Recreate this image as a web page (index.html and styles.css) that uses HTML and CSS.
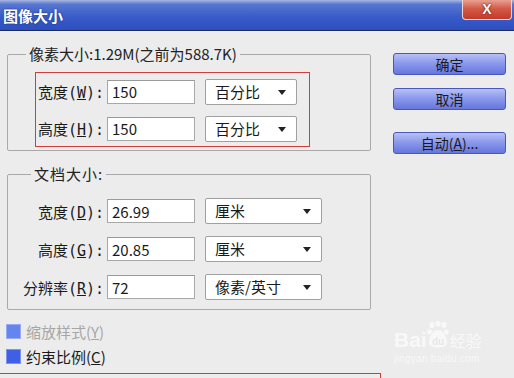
FILE: index.html
```html
<!DOCTYPE html>
<html lang="zh-CN">
<head>
    <meta charset="UTF-8">
    <title>图像大小</title>
    <link rel="stylesheet" href="styles.css">
</head>
<body>

<div class="window">
    <div class="titlebar">
        <span class="title">图像大小</span>
        <span class="close">X</span>
    </div>

    <div class="content">
        <div class="left">
            <fieldset class="group pixel">
                <legend>像素大小:1.29M(之前为588.7K)</legend>
                <div class="highlight">
                    <div class="row">
                        <label><span>宽度(<u>W</u>):</span></label>
                        <input type="text" value="150">
                        <div class="select">百分比<span class="arrow"></span></div>
                    </div>
                    <div class="row">
                        <label><span>高度(<u>H</u>):</span></label>
                        <input type="text" value="150">
                        <div class="select">百分比<span class="arrow"></span></div>
                    </div>
                </div>
            </fieldset>

            <fieldset class="group doc">
                <legend>文档大小:</legend>
                <div class="row">
                    <label><span>宽度(<u>D</u>):</span></label>
                    <input type="text" value="26.99">
                    <div class="select wide">厘米<span class="arrow"></span></div>
                </div>
                <div class="row">
                    <label><span>高度(<u>G</u>):</span></label>
                    <input type="text" value="20.85">
                    <div class="select wide">厘米<span class="arrow"></span></div>
                </div>
                <div class="row">
                    <label><span>分辨率(<u>R</u>):</span></label>
                    <input type="text" value="72">
                    <div class="select wide">像素/英寸<span class="arrow"></span></div>
                </div>
            </fieldset>

            <div class="check disabled"><span class="box"></span>缩放样式(<u>Y</u>)</div>
            <div class="check"><span class="box"></span>约束比例(<u>C</u>)</div>
            <div class="mark-box"></div>
        </div>

        <div class="actions">
            <button>确定</button>
            <button>取消</button>
            <button class="auto">自动(<u>A</u>)...</button>
        </div>
    </div>

    <!-- watermark -->
    <div class="watermark">
        <div class="wm-logo">
            <span>Bai</span>
            <svg width="22" height="30" viewBox="0 0 22 30">
                <ellipse cx="5" cy="4" rx="2.6" ry="3" fill="#fff"/>
                <ellipse cx="11" cy="2.8" rx="2.6" ry="2.8" fill="#fff"/>
                <ellipse cx="17" cy="4" rx="2.6" ry="3" fill="#fff"/>
                <ellipse cx="2.5" cy="11" rx="2.3" ry="2.8" fill="#fff"/>
                <ellipse cx="19.5" cy="11" rx="2.3" ry="2.8" fill="#fff"/>
                <path d="M11 9 C5 9 2 17 2 22 C2 28 20 28 20 22 C20 17 17 9 11 9 Z" fill="#fff"/>
                <text x="11" y="24" text-anchor="middle" font-size="10" font-weight="bold" fill="#e6e6e6" font-family="Liberation Sans, sans-serif">du</text>
            </svg>
            <span class="wm-cn">经验</span>
        </div>
        <div class="wm-url">jingyan.baidu.com</div>
    </div>
</div>

</body>
</html>
```

FILE: styles.css
```css
/* Dialog window */
body {
    margin: 0;
    padding: 0;
    font-family: "Noto Sans CJK SC", "Liberation Sans", sans-serif;
    font-size: 15px;
    color: #1a1a1a;
    background-color: #ececec;
}
.window {
    position: relative;
    width: 514px;
    height: 378px;
    overflow: hidden;
    background-color: #ececec;
}
.titlebar {
    display: flex;
    justify-content: space-between;
    height: 30px;
    border-bottom: 1px solid #1b2b5a;
    background: linear-gradient(to bottom, #a9b8de 0, #5877d2 14%, #3a5cc8 55%, #2c4ebf 100%);
}
.title {
    margin-left: 3px;
    line-height: 31px;
    font-size: 15px;
    font-weight: bold;
    color: #fff;
    text-shadow: 0 0 2px #1a2a70;
}
.close {
    width: 48px;
    height: 19px;
    margin-right: 2px;
    border: 1px solid #f2d6d2;
    border-top: none;
    border-radius: 0 0 4px 4px;
    background: linear-gradient(to bottom, #eaa090 0, #d45a48 45%, #c23a28 100%);
    color: #fff;
    font-family: "Liberation Sans", sans-serif;
    font-size: 14px;
    font-weight: bold;
    line-height: 19px;
    text-align: center;
    text-shadow: 0 0 2px #6a1a10, 0 0 1px #6a1a10;
}
.content {
    display: flex;
    padding-left: 7px;
}
.left {
    width: 364px;
}

/* Group boxes */
.group {
    margin: 14px 0 0;
    border: 1px solid #a9a9a9;
    border-radius: 2px;
    padding: 9px 0 3px 27px;
}
.group legend {
    margin-left: -9px;
    padding: 0 3px;
    font-size: 15px;
    line-height: 18px;
    color: #222;
}
.doc {
    margin-top: 14px;
    padding: 15px 0 9px 28px;
}
.doc legend {
    margin-left: -5px;
    letter-spacing: 1px;
}
.highlight {
    width: 273px;
    border: 1px solid #d23c3c;
    padding: 6px 0 5px;
}
.row {
    display: flex;
    align-items: center;
    height: 25px;
}
.highlight .row + .row {
    margin-top: 12px;
}
.doc .row {
    height: 26px;
}
.doc .row + .row {
    margin-top: 12px;
}
.row label {
    display: flex;
    justify-content: flex-end;
    flex-shrink: 0;
    width: 68px;
    margin-right: 3px;
    font-family: "DejaVu Sans Mono", "Noto Sans CJK SC", monospace;
    font-size: 15px;
    white-space: nowrap;
}
.row label span {
    flex-shrink: 0;
}
.row input {
    box-sizing: border-box;
    width: 88px;
    height: 24px;
    margin: 0 10px 0 0;
    padding: 0 4px;
    border: 1px solid #a8a8a8;
    border-top-color: #9a9a9a;
    background: #fff;
    font-family: "Noto Sans CJK SC", "Liberation Sans", sans-serif;
    font-size: 15px;
    color: #1a1a1a;
}
.select {
    position: relative;
    box-sizing: border-box;
    width: 92px;
    height: 26px;
    padding-left: 9px;
    border: 1px solid #a0a0a0;
    border-radius: 2px;
    background: #fff;
    line-height: 24px;
    font-size: 15px;
}
.select.wide {
    width: 117px;
}
.arrow {
    position: absolute;
    right: 10px;
    top: 10px;
    border-left: 4px solid transparent;
    border-right: 4px solid transparent;
    border-top: 5px solid #222;
}

/* Checkboxes */
.check {
    display: flex;
    align-items: center;
    height: 25px;
    margin-left: -1px;
    font-size: 15px;
}
.doc + .check {
    margin-top: 9px;
}
.check .box {
    box-sizing: border-box;
    width: 15px;
    height: 15px;
    margin-right: 5px;
    border: 1px solid #7b92f0;
    background: #3f5fe6;
}
.check.disabled {
    color: #a6a6a6;
}
.check.disabled .box {
    background: #6684ee;
    border-color: #98aaf2;
}
.mark-box {
    margin: 4px 0 0 -7px;
    width: 380px;
    height: 20px;
    border-top: 1px solid #d23c3c;
    border-right: 1px solid #d23c3c;
}

/* Buttons */
.actions {
    display: flex;
    flex-direction: column;
    margin-left: 22px;
    padding-top: 22px;
}
.actions button {
    width: 113px;
    height: 22px;
    margin-bottom: 13px;
    padding: 0;
    border: 1px solid #4858b8;
    border-radius: 3px;
    background: linear-gradient(to bottom, #b8c0f6 0, #8c9aec 45%, #6676dc 100%);
    font-family: "Noto Sans CJK SC", "Liberation Sans", sans-serif;
    font-size: 14px;
    color: #1a1a1a;
}
.actions button.auto {
    margin-top: 9px;
}

/* Baidu watermark */
.watermark {
    position: absolute;
    left: 394px;
    top: 321px;
    opacity: 0.65;
    color: #fff;
}
.wm-logo {
    display: flex;
    align-items: flex-end;
    height: 30px;
}
.wm-logo span {
    font-family: "Liberation Sans", sans-serif;
    font-size: 21px;
    font-weight: bold;
    line-height: 22px;
}
.wm-logo .wm-cn {
    margin-left: 1px;
    font-family: "Noto Sans CJK SC", sans-serif;
    font-size: 16px;
    font-weight: normal;
}
.wm-url {
    font-family: "Liberation Sans", sans-serif;
    font-size: 10px;
    letter-spacing: 0.3px;
    margin-top: 2px;
}
```
